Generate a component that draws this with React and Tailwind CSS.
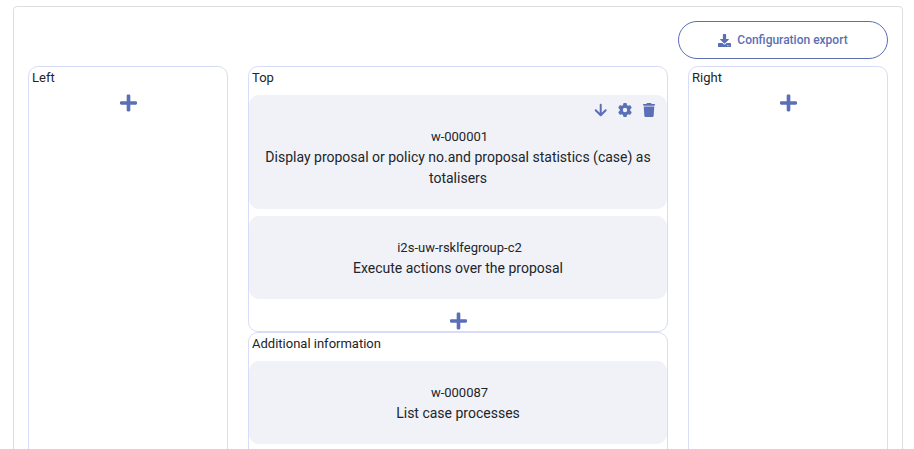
import React from "react";
import { FaPlus, FaDownload } from "react-icons/fa";
import { FaGear, FaTrash } from "react-icons/fa6";

function ArrowDown({ className = "" }) {
  return (
    <svg
      viewBox="0 0 16 16"
      fill="none"
      stroke="currentColor"
      strokeWidth="2"
      strokeLinecap="round"
      strokeLinejoin="round"
      className={className}
    >
      <path d="M7.7 2.8V13M2.7 8.3l5 5 5-5" />
    </svg>
  );
}

function Zone({ title, className = "", children }) {
  return (
    <section className={`flex flex-col rounded-[10px] border border-[#d9dcf8] ${className}`}>
      <h2 className="h-[28px] pl-[3px] text-[13px] leading-[21px]">{title}</h2>
      {children}
    </section>
  );
}

function AddButton({ className = "" }) {
  return (
    <button className={`flex justify-center pl-px text-[#5a6fb5] ${className}`}>
      <FaPlus className="h-[20px] w-[17px]" />
    </button>
  );
}

function Widget({ id, name, actions }) {
  return (
    <article className="mb-[7px] rounded-[10px] bg-[#f1f2f8] pb-[20px] text-center text-[14px] leading-[21px]">
      {actions ? (
        <div className="flex h-[31px] items-start justify-end gap-[8px] pt-[7px] pr-[10px] text-[#5a6fb5]">
          <ArrowDown className="size-[16px]" />
          <FaGear className="size-[16px] p-px" />
          <FaTrash className="size-[16px] p-px" />
        </div>
      ) : (
        <div className="h-[21px]" />
      )}
      <p className="pl-[3px] text-[13px] leading-[21px]">{id}</p>
      <p className="px-[10px]">{name}</p>
    </article>
  );
}

export default function App() {
  return (
    <div className="h-[449px] w-[914px] overflow-hidden bg-white pt-[6px] pl-[13px] font-['Roboto',sans-serif] text-[#212529]">
      <div className="h-[520px] w-[890px] rounded-[4px] border border-[#dedede] px-[14px] pt-[14px]">
        <div className="flex justify-end">
          <button className="flex h-[38px] w-[210px] items-center justify-center gap-[6px] rounded-full border border-[#5a6fb5] text-[12px] font-medium text-[#5a6fb5]">
            <FaDownload className="size-[13px]" />
            <span>Configuration export</span>
          </button>
        </div>
        <div className="mt-[7px] flex gap-[20px]">
          <Zone title="Left" className="h-[420px] w-[200px]">
            <AddButton className="-mt-[2px]" />
          </Zone>
          <div className="w-[420px]">
            <Zone title="Top" className="h-[266px]">
              <Widget
                id="w-000001"
                name="Display proposal or policy no.and proposal statistics (case) as totalisers"
                actions
              />
              <Widget id="i2s-uw-rsklfegroup-c2" name="Execute actions over the proposal" />
              <AddButton className="mt-[5px]" />
            </Zone>
            <Zone title="Additional information" className="h-[154px]">
              <Widget id="w-000087" name="List case processes" />
            </Zone>
          </div>
          <Zone title="Right" className="h-[420px] w-[200px]">
            <AddButton className="-mt-[2px]" />
          </Zone>
        </div>
      </div>
    </div>
  );
}
